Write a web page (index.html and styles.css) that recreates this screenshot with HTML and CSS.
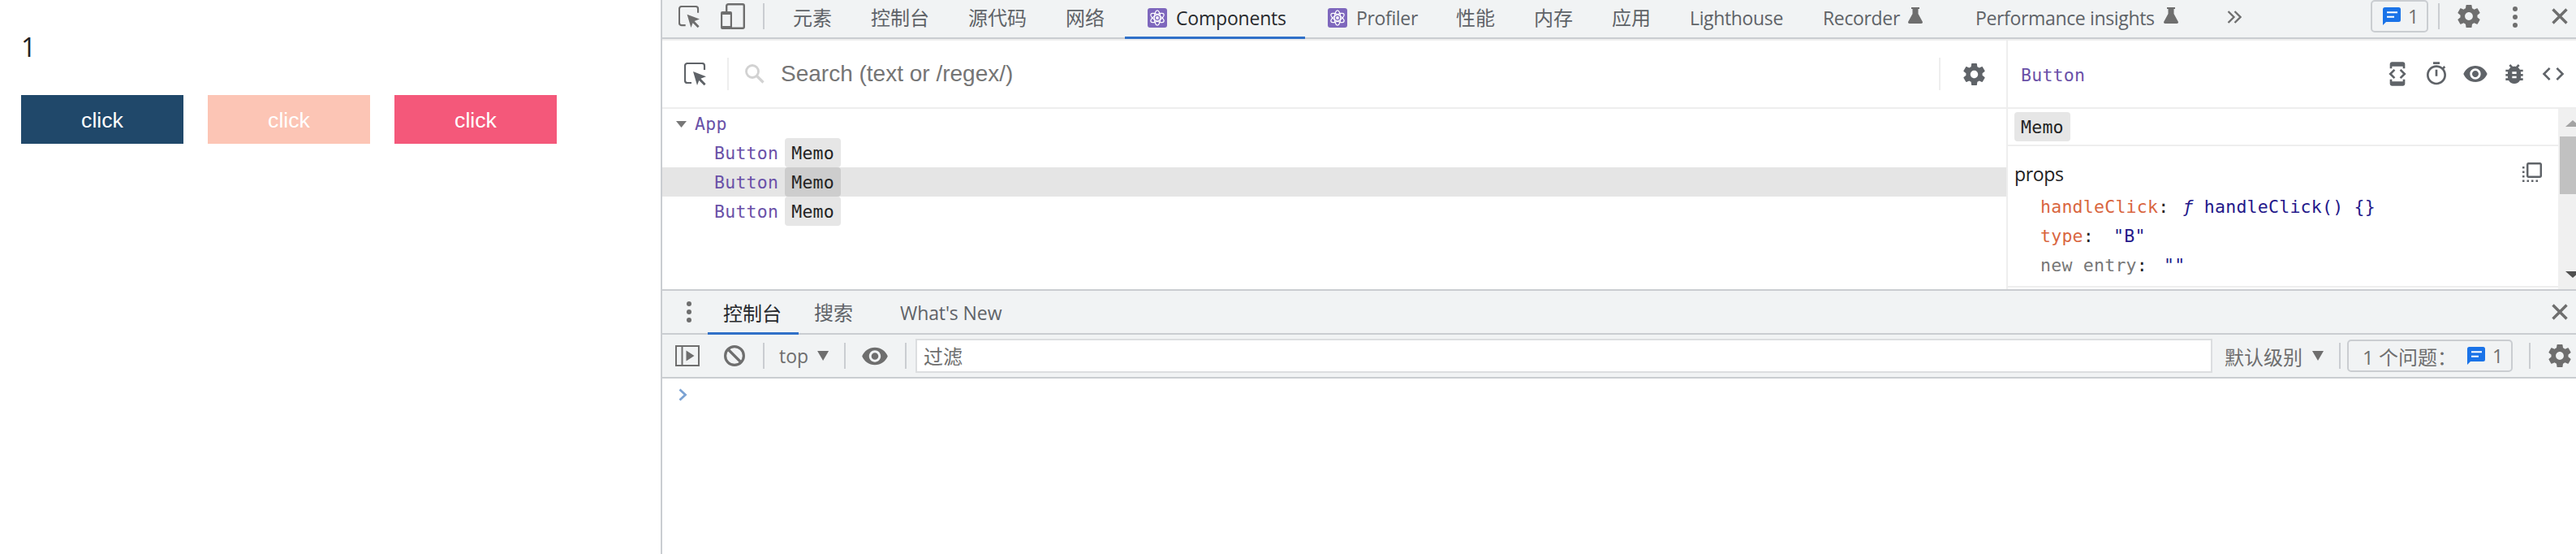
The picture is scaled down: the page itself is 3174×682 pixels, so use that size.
FILE: index.html
```html
<!DOCTYPE html>
<html lang="zh-CN">
<head>
<meta charset="utf-8">
<title>React DevTools</title>
<link rel="stylesheet" href="styles.css">
</head>
<body>
<svg class="defs" width="0" height="0">
  <symbol id="gear" viewBox="2 2 20 20"><path d="M19.43 12.98c.04-.32.07-.64.07-.98s-.03-.66-.07-.98l2.11-1.65c.19-.15.24-.42.12-.64l-2-3.46c-.12-.22-.39-.3-.61-.22l-2.49 1c-.52-.4-1.08-.73-1.69-.98l-.38-2.65C14.46 2.18 14.25 2 14 2h-4c-.25 0-.46.18-.49.42l-.38 2.65c-.61.25-1.17.59-1.69.98l-2.49-1c-.23-.09-.49 0-.61.22l-2 3.46c-.13.22-.07.49.12.64l2.11 1.65c-.04.32-.07.65-.07.98s.03.66.07.98l-2.11 1.65c-.19.15-.24.42-.12.64l2 3.46c.12.22.39.3.61.22l2.49-1c.52.4 1.08.73 1.69.98l.38 2.65c.03.24.24.42.49.42h4c.25 0 .46-.18.49-.42l.38-2.65c.61-.25 1.17-.59 1.69-.98l2.49 1c.23.09.49 0 .61-.22l2-3.46c.12-.22.07-.49-.12-.64l-2.11-1.65zM12 15.5c-1.93 0-3.5-1.57-3.5-3.5s1.57-3.5 3.5-3.5 3.5 1.57 3.5 3.5-1.57 3.5-3.5 3.5z"/></symbol>
  <symbol id="eye" viewBox="1 4 22 16"><path d="M12 4.5C7 4.5 2.73 7.61 1 12c1.73 4.39 6 7.5 11 7.5s9.27-3.11 11-7.5c-1.73-4.39-6-7.5-11-7.5zM12 17c-2.76 0-5-2.24-5-5s2.24-5 5-5 5 2.24 5 5-2.24 5-5 5zm0-8c-1.66 0-3 1.34-3 3s1.34 3 3 3 3-1.34 3-3-1.34-3-3-3z"/></symbol>
  <symbol id="inspect" viewBox="0 0 27 29"><path d="M9 25H4a3 3 0 0 1-3-3V4a3 3 0 0 1 3-3h18a3 3 0 0 1 3 3v5" fill="none" stroke="currentColor" stroke-width="2.2"/><path d="M11 11l16 6.2-6.6 2.6 6.2 6.4-2 2-6.3-6.3L16 28z"/></symbol>
  <symbol id="react" viewBox="0 0 24 24"><rect width="24" height="24" rx="3" fill="#7e67bd"/><g fill="none" stroke="#fff" stroke-width="1.25"><ellipse cx="12" cy="12" rx="9.2" ry="3.7" transform="rotate(30 12 12)"/><ellipse cx="12" cy="12" rx="9.2" ry="3.7" transform="rotate(90 12 12)"/><ellipse cx="12" cy="12" rx="9.2" ry="3.7" transform="rotate(150 12 12)"/></g><circle cx="12" cy="12" r="1.9" fill="#fff"/></symbol>
  <symbol id="flask" viewBox="0 0 18 20"><path d="M4 0h10v2h-1.5v6l5.2 9.5c.7 1.400 0 2.500-1.400 2.500H1.700c-1.400 0-2.100-1.100-1.400-2.500L5.500 8V2H4z"/></symbol>
  <symbol id="dots" viewBox="0 0 6 26"><circle cx="3" cy="3" r="3"/><circle cx="3" cy="13" r="3"/><circle cx="3" cy="23" r="3"/></symbol>
  <symbol id="cross" viewBox="0 0 20 20"><path d="M1.500 1.500l17 17M18.500 1.500l-17 17" fill="none" stroke="currentColor" stroke-width="3.400"/></symbol>
  <symbol id="message" viewBox="0 0 22 22"><path d="M2.500 0h17A2.500 2.500 0 0 1 22 2.500v13a2.500 2.500 0 0 1-2.500 2.500H4l-4 4V2.500A2.500 2.500 0 0 1 2.500 0z" fill="#1a73e8"/><path d="M5 6.300h13M5 11.700h9" stroke="#fff" stroke-width="2"/></symbol>
</svg>

<div class="window">
  <main class="page">
    <p class="count">1</p>
    <div class="buttons">
      <button class="btn navy">click</button>
      <button class="btn peach">click</button>
      <button class="btn pink">click</button>
    </div>
  </main>

  <section class="devtools">
    <header class="tabbar">
      <svg class="ic-inspect" width="26" height="28"><use href="#inspect"/></svg>
      <svg class="ic-device" width="30" height="32" viewBox="0 0 30 32"><path d="M7.200 10V3.500Q7.200 1.200 9.500 1.200H27Q28.800 1.200 28.800 3V29Q28.800 30.800 27 30.800H13" fill="none" stroke="currentColor" stroke-width="2.400"/><path fill-rule="evenodd" d="M2 10h10a2 2 0 0 1 2 2v18a2 2 0 0 1-2 2H2a2 2 0 0 1-2-2V12a2 2 0 0 1 2-2zm.200 4v14h9.600V14z"/></svg>
      <i class="rule"></i>
      <nav class="tabs">
        <span class="tab">元素</span>
        <span class="tab">控制台</span>
        <span class="tab">源代码</span>
        <span class="tab">网络</span>
        <span class="tab active components"><svg width="24" height="24"><use href="#react"/></svg>Components</span>
        <span class="tab profiler"><svg width="24" height="24"><use href="#react"/></svg>Profiler</span>
        <span class="tab">性能</span>
        <span class="tab">内存</span>
        <span class="tab">应用</span>
        <span class="tab lighthouse">Lighthouse</span>
        <span class="tab recorder">Recorder<svg width="18" height="20"><use href="#flask"/></svg></span>
        <span class="tab insights">Performance insights<svg width="18" height="20"><use href="#flask"/></svg></span>
      </nav>
      <svg class="more" width="18" height="16" viewBox="0 0 18 16"><path d="M1.500 1l7 7-7 7M9.500 1l7 7-7 7" fill="none" stroke="currentColor" stroke-width="2.300"/></svg>
      <span class="issues top"><svg width="22" height="22"><use href="#message"/></svg>1</span>
      <i class="rule"></i>
      <svg class="ic-gear" width="28" height="28"><use href="#gear"/></svg>
      <svg class="ic-dots" width="6" height="26"><use href="#dots"/></svg>
      <svg class="ic-cross" width="20" height="20"><use href="#cross"/></svg>
    </header>

    <div class="react">
      <div class="tree-pane">
        <div class="searchbar">
          <svg width="27" height="29"><use href="#inspect"/></svg>
          <i class="rule light"></i>
          <svg class="glass" width="24" height="24" viewBox="0 0 24 24"><circle cx="9" cy="9" r="7.500" fill="none" stroke="currentColor" stroke-width="2.800"/><path d="M14.500 14.500l8 8" stroke="currentColor" stroke-width="3.200"/></svg>
          <span class="placeholder">Search (text or /regex/)</span>
          <i class="rule light"></i>
          <svg class="tree-gear" width="27" height="27"><use href="#gear"/></svg>
        </div>
        <div class="tree">
          <div class="node root"><i class="caret"></i>App</div>
          <div class="node">Button<span class="badge">Memo</span></div>
          <div class="node selected">Button<span class="badge">Memo</span></div>
          <div class="node">Button<span class="badge">Memo</span></div>
        </div>
      </div>
      <aside class="inspector">
        <div class="insp-head">
          <span class="insp-name">Button</span>
          <svg width="32" height="32" viewBox="0 0 24 24"><path d="M7 5h10v2h2V3c0-1.100-.9-1.990-2-1.990L7 1c-1.100 0-2 .9-2 2v4h2V5zm8.410 11.590L20 12l-4.590-4.590L14 8.830 17.170 12 14 15.170l1.410 1.420zM10 15.170L6.830 12 10 8.830 8.590 7.410 4 12l4.590 4.590L10 15.170zM17 19H7v-2H5v4c0 1.100.9 2 2 2h10c1.100 0 2-.9 2-2v-4h-2v2z"/></svg>
          <svg width="32" height="32" viewBox="0 0 24 24"><path d="M15 1H9v2h6V1zm-4 13h2V8h-2v6zm8.030-6.610l1.420-1.420c-.43-.51-.9-.99-1.410-1.410l-1.420 1.420C16.070 4.740 14.120 4 12 4c-4.970 0-9 4.030-9 9s4.020 9 9 9 9-4.030 9-9c0-2.120-.74-4.070-1.970-5.610zM12 20c-3.870 0-7-3.130-7-7s3.130-7 7-7 7 3.130 7 7-3.130 7-7 7z"/></svg>
          <svg width="32" height="32" viewBox="0 0 24 24"><path d="M12 4.500C7 4.500 2.730 7.610 1 12c1.730 4.390 6 7.500 11 7.500s9.270-3.110 11-7.500c-1.730-4.390-6-7.500-11-7.500zM12 17c-2.760 0-5-2.240-5-5s2.240-5 5-5 5 2.240 5 5-2.240 5-5 5zm0-8c-1.660 0-3 1.340-3 3s1.340 3 3 3 3-1.340 3-3-1.340-3-3-3z"/></svg>
          <svg width="32" height="32" viewBox="0 0 24 24"><path d="M20 8h-2.810c-.45-.78-1.070-1.450-1.820-1.960L17 4.410 15.590 3l-2.170 2.170C12.960 5.060 12.490 5 12 5c-.49 0-.96.060-1.410.17L8.410 3 7 4.410l1.620 1.630C7.880 6.550 7.260 7.220 6.810 8H4v2h2.090c-.05.33-.09.66-.09 1v1H4v2h2v1c0 .34.040.67.090 1H4v2h2.810c1.040 1.790 2.970 3 5.190 3s4.150-1.210 5.190-3H20v-2h-2.090c.05-.33.090-.66.090-1v-1h2v-2h-2v-1c0-.34-.04-.67-.09-1H20V8zm-6 8h-4v-2h4v2zm0-4h-4v-2h4v2z"/></svg>
          <svg width="32" height="32" viewBox="0 0 24 24"><path d="M9.400 16.600L4.800 12l4.600-4.600L8 6l-6 6 6 6 1.400-1.400zm5.200 0l4.600-4.600-4.600-4.600L16 6l6 6-6 6-1.400-1.400z"/></svg>
        </div>
        <div class="insp-body">
          <div class="insp-main">
            <div class="insp-badges"><span class="badge">Memo</span></div>
            <div class="props">
              <div class="props-head"><span>props</span>
                <svg width="24" height="24" viewBox="0 0 24 24"><rect x="6.200" y="1.200" width="16.600" height="16.600" rx="1.500" fill="none" stroke="currentColor" stroke-width="2.500"/><path d="M0 5h2.500v2.500H0zM0 10.500h2.500V13H0zM0 16h2.500v2.500H0zM0 21.500h2.500V24H0zM5.500 21.500H8V24H5.500zM11 21.500h2.500V24H11zM16.500 21.500H19V24h-2.500z"/></svg>
              </div>
              <div class="prop"><span class="key">handleClick</span>:<span class="val fn"><em>ƒ</em> handleClick() {}</span></div>
              <div class="prop"><span class="key">type</span>:<span class="val str">"B"</span></div>
              <div class="prop"><span class="key new">new entry</span>:<span class="val entry">""</span></div>
            </div>
          </div>
          <div class="scroll"><i class="up"></i><i class="thumb"></i><i class="down"></i></div>
        </div>
      </aside>
    </div>

    <div class="drawer-tabs">
      <svg width="6" height="26"><use href="#dots"/></svg>
      <span class="dtab active">控制台</span>
      <span class="dtab search">搜索</span>
      <span class="dtab whats">What's New</span>
      <svg class="ic-cross" width="20" height="20"><use href="#cross"/></svg>
    </div>

    <div class="console-bar">
      <svg class="c-side" width="30" height="26" viewBox="0 0 30 26"><path d="M1 1h28v24H1zM8.500 1v24" fill="none" stroke="currentColor" stroke-width="2"/><path d="M13.500 6.500v13l10-6.500z"/></svg>
      <svg class="c-ban" width="26" height="26" viewBox="0 0 26 26"><g fill="none" stroke="currentColor" stroke-width="3.200"><circle cx="13" cy="13" r="11.400"/><path d="M5 5l16 16"/></g></svg>
      <i class="rule"></i>
      <span class="context">top<i class="drop"></i></span>
      <i class="rule"></i>
      <svg class="c-eye" width="32" height="23"><use href="#eye"/></svg>
      <i class="rule"></i>
      <div class="filter">过滤</div>
      <span class="level">默认级别<i class="drop"></i></span>
      <i class="rule"></i>
      <span class="issues bottom"><span class="issue-label">1 个问题：</span><svg width="22" height="22"><use href="#message"/></svg>1</span>
      <i class="rule"></i>
      <svg class="c-gear" width="28" height="28"><use href="#gear"/></svg>
    </div>
    <div class="console">
      <svg width="11" height="16" viewBox="0 0 11 16"><path d="M1.500 1.500L8.500 8l-7 6.500" fill="none" stroke="#7ba2d3" stroke-width="2.800"/></svg>
    </div>
  </section>
</div>
</body>
</html>
```

FILE: styles.css
```css
* { box-sizing: border-box; }
body {
  margin: 0;
  background: #fff;
  font-family: "Open Sans", "Noto Sans CJK SC", sans-serif;
  overflow: hidden;
}
.defs { display: none; }
svg { display: block; flex: none; fill: currentColor; }
.window { display: flex; width: 3174px; height: 682px; }

/* page under test */
.page { width: 814px; flex: none; padding: 36px 0 0 26px; }
.count { margin: 0; height: 81px; font-size: 32px; line-height: 44px; color: #202124; }
.buttons { display: flex; gap: 30px; }
.btn {
  width: 200px; height: 60px; padding: 2px 0 0; border: 0; color: #fff;
  font: 26.67px "Liberation Sans", Arial, sans-serif;
}
.navy { background: #20486a; }
.peach { background: #fcc5b5; }
.pink { background: #f4587a; }

/* shared devtools pieces */
.devtools {
  flex: 1; min-width: 0; display: flex; flex-direction: column;
  border-left: 2px solid #cacdd1; color: #5f6368;
  font-size: 23px; letter-spacing: -0.35px;
}
.rule { flex: none; width: 2px; height: 32px; background: #cacdd1; }
.rule.light { height: 40px; background: #eee; }
.issues {
  display: flex; align-items: center; flex: none; height: 40px;
  border: 2px solid #cacdd1; border-radius: 5px;
}
.badge { background: #e6e6e6; color: #222; border-radius: 4px; padding: 0 8px; height: 36px; }
.drop {
  width: 14px; height: 12px; background: #6e6e6e;
  clip-path: polygon(0 0, 100% 0, 50% 100%);
}

/* top tab bar */
.tabbar {
  flex: none; display: flex; height: 48px; align-items: flex-start;
  background: #f1f3f4; border-bottom: 2px solid #cacdd1; padding-left: 20px;
  color: #6e6e6e;
}
.ic-inspect { margin-top: 7px; }
.ic-device { margin: 4px 0 0 26px; }
.tabbar > .rule { margin: 4px 0 0 22px; }
.tabs { display: flex; margin-left: 11px; height: 48px; color: #5f6368; }
.tab {
  display: flex; flex: none; align-items: center; height: 48px; padding: 0 24px 5px;
  font-size: 24px; line-height: 40px; letter-spacing: 0; white-space: nowrap;
}
.components, .profiler, .lighthouse, .recorder, .insights { font-size: 23px; letter-spacing: -0.35px; }
.components, .profiler { padding-left: 28px; gap: 11px; }
.components { width: 222px; margin-left: 1px; border-bottom: 3px solid #3070c8; padding-bottom: 1px; color: #27292c; letter-spacing: -0.2px; }
.profiler { width: 162px; padding-bottom: 4px; }
.lighthouse { width: 164px; }
.recorder { width: 188px; justify-content: space-between; padding-right: 41px; }
.insights { width: 298px; justify-content: space-between; padding-right: 24px; }
.recorder svg, .insights svg { margin-top: -5px; color: #6e6e6e; }
.insights svg { margin-right: 0; }
.more { margin: 13px 0 0 36px; }
.issues.top { width: 71px; margin-left: auto; padding: 0 0 0 13px; gap: 9px; font-size: 23px; }
.tabbar > .issues + .rule { margin-left: 12px; }
.ic-gear { margin: 6px 0 0 22px; }
.ic-dots { margin: 8px 0 0 40px; }
.tabbar .ic-cross { margin: 10px 10px 0 42px; }

/* components panel */
.react { display: flex; flex: none; height: 308px; border-top: 2px solid #eee; }
.tree-pane { width: 1658px; flex: none; border-right: 2px solid #eee; }
.searchbar {
  display: flex; align-items: center; height: 84px; border-bottom: 2px solid #eee;
  padding-left: 27px; color: #5f6368;
}
.searchbar .rule { margin-left: 26px; }
.glass { margin-left: 20px; color: #d2d2d2; }
.placeholder {
  margin: 0 auto 0 20px; color: #757575; letter-spacing: 0;
  font: 28px "Liberation Sans", Arial, sans-serif;
}
.tree-gear { margin: 0 26px 0 28px; }
.tree, .insp-name, .badge, .prop {
  font-family: "DejaVu Sans Mono", monospace; font-size: 21.5px; letter-spacing: 0.256px;
}
.node { display: flex; height: 36px; line-height: 38px; padding-left: 64px; color: #6a51a8; }
.node .badge { margin-left: 8px; }
.root { padding-left: 17px; }
.caret { width: 13px; height: 8px; margin: 15px 10px 0 0; background: #777; clip-path: polygon(0 0, 100% 0, 50% 100%); }
.selected { background: #e5e5e5; }
.selected .badge { background: #cdcdcd; }

/* inspected element */
.inspector { flex: 1; min-width: 0; display: flex; flex-direction: column; }
.insp-head {
  display: flex; align-items: center; gap: 16px; flex: none; height: 84px;
  border-bottom: 2px solid #eee; padding: 0 12px 0 16px; color: #5f6368;
}
.insp-name { margin-right: auto; padding-top: 2px; color: #6a51a8; }
.insp-body { display: flex; flex: 1; min-height: 0; }
.insp-main { flex: 1; display: flex; flex-direction: column; padding-bottom: 2px; }
.insp-badges { height: 46px; padding: 4px 8px; border-bottom: 2px solid #eee; }
.insp-badges .badge { display: block; width: 69px; line-height: 38px; }
.props { flex: 1; border-bottom: 2px solid #eee; padding: 14px 0 0 8px; color: #222; }
.props-head { display: flex; align-items: center; justify-content: space-between; height: 42px; padding-right: 20px; }
.props-head span { margin-bottom: 3px; font-size: 23px; }
.props-head svg { margin-bottom: 6px; color: #5f6368; }
.prop { height: 36px; line-height: 38px; padding-left: 32px; white-space: pre; }
.key { color: #d9663f; }
.key.new { color: #777; }
.val { color: #23188a; margin-left: 20px; }
.val.fn { margin-left: 17px; }
.val.str { margin-left: 24px; }
.scroll { flex: none; width: 22px; display: flex; flex-direction: column; overflow: hidden; background: #f0f0f0; }
.up, .down { flex: none; width: 18px; height: 8px; margin-left: 9px; }
.up { margin-top: 14px; background: #a3a3a3; clip-path: polygon(50% 0, 100% 100%, 0 100%); }
.thumb { height: 71px; margin: 12px 0 0 2px; background: #c1c1c1; }
.down { margin-top: 95px; background: #505050; clip-path: polygon(0 0, 100% 0, 50% 100%); }

/* drawer */
.drawer-tabs {
  display: flex; flex: none; align-items: center; height: 56px; padding: 0 10px 0 30px;
  background: #f1f3f4; border: solid #cacdd1; border-width: 2px 0; color: #6e6e6e;
}
.dtab { font-size: 24px; letter-spacing: 0; color: #5f6368; height: 54px; line-height: 56px; white-space: nowrap; }
.dtab.active { width: 112px; margin: 0 0 -1px 20px; padding-left: 19px; color: #27292c; border-bottom: 3px solid #3070c8; }
.dtab.search { margin-left: 19px; }
.dtab.whats { margin-left: 58px; font-size: 23px; letter-spacing: -0.1px; }
.drawer-tabs .ic-cross { margin-left: auto; }
.console-bar {
  display: flex; flex: none; align-items: center; height: 54px; padding: 0 6px 0 16px;
  background: #f1f3f4; border-bottom: 2px solid #cacdd1; color: #6e6e6e;
}
.c-ban { margin-left: 30px; }
.c-ban + .rule { margin-left: 22px; }
.context { display: flex; align-items: center; width: 98px; padding-left: 18px; gap: 11px; line-height: 40px; letter-spacing: 0; }
.c-eye { margin: 0 21px 0 20px; }
.filter {
  flex: 1; height: 42px; margin-left: 11px; padding-left: 8px; background: #fff;
  border: 2px solid #dcdee0; font-size: 24px; line-height: 40px; letter-spacing: 0;
}
.level { display: flex; align-items: center; width: 156px; padding-left: 15px; gap: 12px; font-size: 24px; letter-spacing: 0; white-space: nowrap; }
.issues.bottom { width: 204px; margin: 0 20px 0 8px; padding-left: 17px; font-size: 23px; white-space: nowrap; }
.issue-label { width: 129px; font-size: 24px; letter-spacing: 0; }
.issues.bottom svg { margin-right: 9px; }
.c-gear { margin-left: 22px; }
.console { flex: 1; padding: 12px 0 0 20px; background: #fff; }
```
